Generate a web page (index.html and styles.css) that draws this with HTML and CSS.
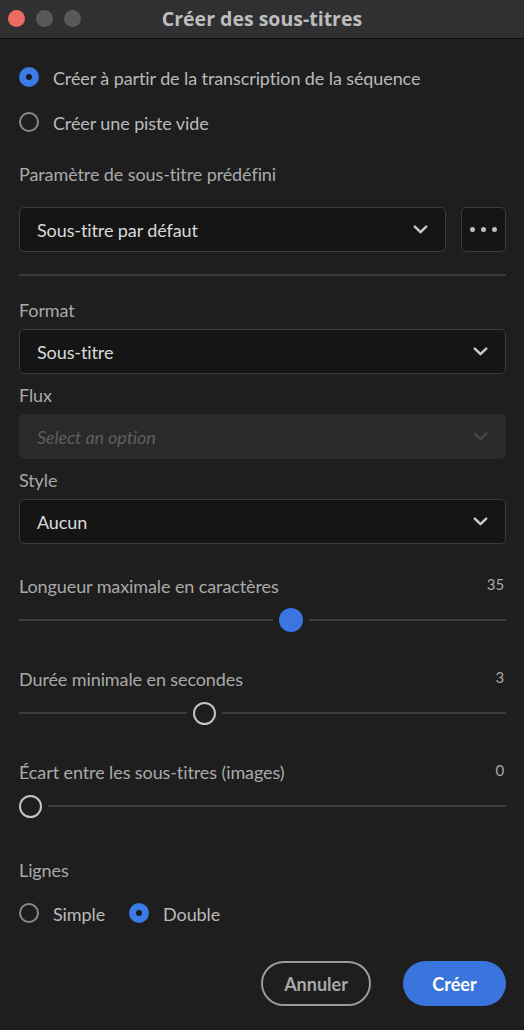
FILE: index.html
```html
<!DOCTYPE html>
<html lang="fr">
<head>
<meta charset="utf-8">
<title>Créer des sous-titres</title>
<link rel="stylesheet" href="styles.css">
</head>
<body>
<div class="window">
  <header class="titlebar">
    <div class="lights">
      <span class="light light-close"></span>
      <span class="light"></span>
      <span class="light"></span>
    </div>
    <h1 class="title">Créer des sous-titres</h1>
    <div></div>
  </header>

  <main class="content">
    <div class="radio-list">
      <div class="radio"><span class="radio-mark is-checked"></span><span>Créer à partir de la transcription de la séquence</span></div>
      <div class="radio"><span class="radio-mark"></span><span>Créer une piste vide</span></div>
    </div>

    <div class="label label-preset">Paramètre de sous-titre prédéfini</div>
    <div class="preset-row">
      <div class="select">
        <span>Sous-titre par défaut</span>
        <svg class="chevron" width="15" height="9" viewBox="0 0 15 9"><path d="M1.8 1.6 L7.5 7.2 L13.2 1.6" fill="none" stroke="currentColor" stroke-width="2.5" stroke-linecap="round" stroke-linejoin="round"/></svg>
      </div>
      <div class="more-btn"><span class="dot"></span><span class="dot"></span><span class="dot"></span></div>
    </div>

    <div class="divider"></div>

    <div class="label label-first">Format</div>
    <div class="select select-field">
      <span>Sous-titre</span>
      <svg class="chevron" width="15" height="9" viewBox="0 0 15 9"><path d="M1.8 1.6 L7.5 7.2 L13.2 1.6" fill="none" stroke="currentColor" stroke-width="2.5" stroke-linecap="round" stroke-linejoin="round"/></svg>
    </div>

    <div class="label">Flux</div>
    <div class="select select-field is-disabled">
      <span>Select an option</span>
      <svg class="chevron" width="15" height="9" viewBox="0 0 15 9"><path d="M1.8 1.6 L7.5 7.2 L13.2 1.6" fill="none" stroke="currentColor" stroke-width="2.5" stroke-linecap="round" stroke-linejoin="round"/></svg>
    </div>

    <div class="label">Style</div>
    <div class="select select-field">
      <span>Aucun</span>
      <svg class="chevron" width="15" height="9" viewBox="0 0 15 9"><path d="M1.8 1.6 L7.5 7.2 L13.2 1.6" fill="none" stroke="currentColor" stroke-width="2.5" stroke-linecap="round" stroke-linejoin="round"/></svg>
    </div>

    <div class="slider-field slider-first">
      <div class="slider-head"><span class="label-text">Longueur maximale en caractères</span><span class="slider-value">35</span></div>
      <div class="slider">
        <span class="track track-fill" style="width:254px"></span>
        <span class="thumb is-focused"></span>
        <span class="track track-rest"></span>
      </div>
    </div>

    <div class="slider-field">
      <div class="slider-head"><span class="label-text">Durée minimale en secondes</span><span class="slider-value">3</span></div>
      <div class="slider">
        <span class="track track-fill" style="width:168px"></span>
        <span class="thumb"></span>
        <span class="track track-rest"></span>
      </div>
    </div>

    <div class="slider-field">
      <div class="slider-head"><span class="label-text">Écart entre les sous-titres (images)</span><span class="slider-value">0</span></div>
      <div class="slider">
        <span class="thumb"></span>
        <span class="track track-rest"></span>
      </div>
    </div>

    <div class="label label-lines">Lignes</div>
    <div class="radio-inline">
      <div class="radio"><span class="radio-mark"></span><span>Simple</span></div>
      <div class="radio"><span class="radio-mark is-checked"></span><span>Double</span></div>
    </div>

    <div class="actions">
      <button class="btn btn-secondary">Annuler</button>
      <button class="btn btn-primary">Créer</button>
    </div>
  </main>
</div>
</body>
</html>
```

FILE: styles.css
```css
* {
  box-sizing: border-box;
  margin: 0;
  padding: 0;
}

html, body {
  background: #1e1e1e;
}

body {
  width: 524px;
  height: 1030px;
  overflow: hidden;
  font-family: Lato, "Open Sans", sans-serif;
  font-size: 18px;
  line-height: 24px;
  letter-spacing: -0.1px;
  color: #aaaaaa;
}

.window {
  display: flex;
  flex-direction: column;
  height: 100%;
}

.titlebar {
  flex: none;
  height: 39px;
  display: grid;
  grid-template-columns: 1fr auto 1fr;
  align-items: center;
  background: #302f31;
  border-bottom: 1px solid #0e0e0e;
}

.lights {
  display: flex;
  gap: 11px;
  padding-left: 8px;
  margin-top: -1px;
}

.light {
  width: 17px;
  height: 17px;
  border-radius: 50%;
  background: #59585b;
}

.light-close {
  background: #ec6a5e;
}

.title {
  font-family: "Open Sans", sans-serif;
  font-weight: 700;
  font-size: 19.5px;
  line-height: 24px;
  letter-spacing: 0;
  color: #bdbdbd;
}

.content {
  display: flex;
  flex-direction: column;
  padding: 27px 18px 0 19px;
}

/* radios */
.radio-list {
  display: flex;
  flex-direction: column;
  gap: 21px;
}

.radio {
  display: flex;
  align-items: center;
  gap: 14px;
  color: #bababa;
}

.radio-mark {
  flex: none;
  width: 20px;
  height: 20px;
  border-radius: 50%;
  border: 2.5px solid #8a8a8a;
  margin-bottom: 2px;
}

.radio-mark.is-checked {
  border: none;
  background: #3b7be6;
  display: flex;
  align-items: center;
  justify-content: center;
}

.radio-mark.is-checked::after {
  content: "";
  width: 6px;
  height: 6px;
  border-radius: 50%;
  background: #1a1a1a;
}

.radio-inline {
  display: flex;
  gap: 24px;
  margin-top: 20px;
}

/* labels */
.label {
  margin-top: 9px;
  color: #aaaaaa;
}

.label-preset {
  margin-top: 27px;
}

.label-first {
  margin-top: 22px;
}

.label-lines {
  margin-top: 40px;
}

/* selects */
.preset-row {
  display: flex;
  gap: 15px;
  margin-top: 21px;
}

.select {
  flex: 1;
  height: 45px;
  display: flex;
  align-items: center;
  justify-content: space-between;
  padding: 0 17px;
  background: #151515;
  border: 1px solid #3b3b3b;
  border-radius: 5px;
  color: #dadada;
}

.select-field {
  flex: none;
  margin-top: 7px;
}

.chevron {
  color: #c8c8c8;
  flex: none;
}

.select.is-disabled {
  background: #2a2a2a;
  border-color: #2a2a2a;
  color: #5f5f5f;
  font-style: italic;
}

.select.is-disabled .chevron {
  color: #474747;
}

.more-btn {
  flex: none;
  width: 45px;
  height: 45px;
  display: flex;
  align-items: center;
  justify-content: center;
  gap: 6px;
  background: #151515;
  border: 1px solid #3b3b3b;
  border-radius: 5px;
}

.dot {
  width: 5px;
  height: 5px;
  border-radius: 50%;
  background: #bdbdbd;
}

.divider {
  height: 2px;
  margin-top: 22px;
  background: #3a3a3a;
}

/* sliders */
.slider-field {
  margin-top: 35px;
}

.slider-first {
  margin-top: 30px;
}

.slider-head {
  display: flex;
  justify-content: space-between;
  align-items: flex-start;
}

.label-text {
  color: #aaaaaa;
}

.slider-value {
  font-size: 15px;
  line-height: 20px;
  color: #a8a8a8;
  padding-right: 2px;
}

.slider {
  display: flex;
  align-items: center;
  height: 24px;
  margin-top: 10px;
}

.track {
  height: 2px;
  background: #3c3c3c;
}

.track-fill {
  flex: none;
  margin-right: 6px;
}

.track-rest {
  flex: 1;
  margin-left: 6px;
}

.thumb {
  flex: none;
  width: 23px;
  height: 23px;
  border-radius: 50%;
  border: 2.5px solid #c4c4c4;
}

.thumb.is-focused {
  width: 24px;
  height: 24px;
  border: none;
  background: #3a75e0;
}

/* buttons */
.actions {
  display: flex;
  justify-content: flex-end;
  gap: 32px;
  margin-top: 35px;
}

.btn {
  height: 45px;
  border-radius: 23px;
  font-family: Lato, "Open Sans", sans-serif;
  font-weight: 700;
  font-size: 18px;
  display: flex;
  align-items: center;
  justify-content: center;
}

.btn-secondary {
  width: 110px;
  background: transparent;
  border: 2.5px solid #9a9a9a;
  color: #a9a9a9;
}

.btn-primary {
  width: 103px;
  background: #3a74dd;
  border: none;
  color: #ffffff;
}
```
